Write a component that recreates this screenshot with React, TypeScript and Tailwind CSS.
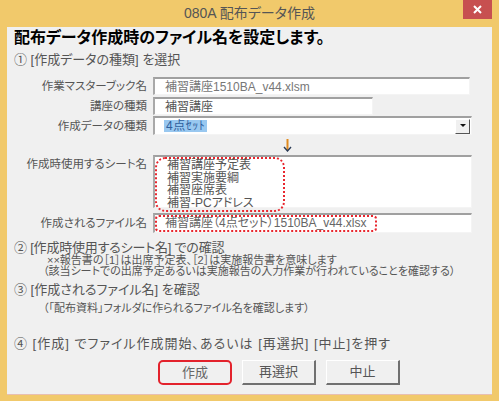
import React from 'react';

const FONT = "font-['Liberation_Sans','Noto_Sans_CJK_JP',sans-serif] [font-feature-settings:'palt']";

const sunken =
  'bg-white border-t-2 border-l-2 border-b border-r border-t-[#a0a0a0] border-l-[#a9a9a9] border-b-[#f4f4f4] border-r-[#f4f4f4]';

const Label = ({ children }: { children: React.ReactNode }) => (
  <div className="w-[140px] shrink-0 text-right text-[11.5px] leading-[14px] text-[#555]">{children}</div>
);

const Button = ({ children, primary }: { children: React.ReactNode; primary?: boolean }) =>
  primary ? (
    <button className="w-[74px] h-[25px] rounded-[5px] border-2 border-[#e3222c] bg-[#f0f0f0] text-[13px] text-[#666] flex items-center justify-center">
      {children}
    </button>
  ) : (
    <button className="w-[74px] h-[25px] bg-[#f0f0f0] border-t border-l border-t-white border-l-white border-r-2 border-b-2 border-r-[#707070] border-b-[#707070] text-[13px] text-[#555] flex items-center justify-center">
      {children}
    </button>
  );

export default function App() {
  return (
    <div className={`w-[499px] h-[401px] bg-[#f1c96b] flex flex-col ${FONT}`}>
      {/* title bar */}
      <div className="h-[27px] shrink-0 grid grid-cols-[1fr_auto_1fr]">
        <div />
        <div className="text-[14px] leading-[27px] text-[#555]">080A 配布データ作成</div>
        <div className="flex justify-end pr-[7px]">
          <div className="w-[29px] h-[19px] bg-[#c75050] flex items-center justify-center">
            <svg width="9" height="9" viewBox="0 0 9 9">
              <path d="M1 1 L8 8 M8 1 L1 8" stroke="white" strokeWidth="2" />
            </svg>
          </div>
        </div>
      </div>

      {/* client area */}
      <div className="mx-[7px] h-[368px] bg-[#f0f0f0] border-b border-[#e8bfb0] flex flex-col pl-[7px]">
        <div className="pt-[1px] text-[16px] leading-[20px] font-bold text-black">
          配布データ作成時のファイル名を設定します。
        </div>
        <div className="mt-[4px] text-[13px] leading-[16px] text-[#555]">① [作成データの種類] を選択</div>

        {/* form rows */}
        <div className="mt-[9px] flex flex-col -ml-[7px]">
          <div className="flex items-center gap-[6px]">
            <Label>作業マスターブック名</Label>
            <div className={`w-[317px] h-[18px] ${sunken} flex items-center pl-[10px] text-[12px] leading-[14px] text-[#777]`}>
              補習講座1510BA_v44.xlsm
            </div>
          </div>
          <div className="mt-[2px] flex items-center gap-[6px]">
            <Label>講座の種類</Label>
            <div className={`w-[220px] h-[18px] ${sunken} flex items-center pl-[10px] text-[12px] leading-[14px] text-[#555]`}>
              補習講座
            </div>
          </div>
          <div className="mt-[1px] flex items-center gap-[6px]">
            <Label>作成データの種類</Label>
            <div className={`w-[319px] h-[19px] ${sunken} flex items-center pl-[9px] pr-[1px]`}>
              <span className="bg-[#99c8f0] text-[#2f5f9e] text-[12px] leading-[12px] px-[2px] tracking-[0.5px]">4点ｾｯﾄ</span>
              <div className="ml-auto w-[15px] h-[15px] bg-[#f0f0f0] border-t border-l border-t-white border-l-white border-r border-b border-r-[#555] border-b-[#555] flex items-center justify-center">
                <svg width="6" height="4" viewBox="0 0 6 4">
                  <path d="M0 0 H6 L3 3 Z" fill="#111" />
                </svg>
              </div>
            </div>
          </div>

          {/* arrow */}
          <div className="h-[20px] flex items-center pl-[276px]">
            <svg width="9" height="13" viewBox="0 0 9 13">
              <path d="M4.5 0 V11" stroke="#e08a1e" strokeWidth="2" />
              <path d="M1 8 L4.5 12 L8 8" stroke="#2a3a55" strokeWidth="1.4" fill="none" />
            </svg>
          </div>

          <div className="flex items-start gap-[6px]">
            <div className="pt-[2px]">
              <Label>作成時使用するシート名</Label>
            </div>
            <div className={`relative w-[319px] h-[53px] ${sunken}`}>
              <div className="absolute left-0 top-0 w-[130px] h-[55px] rounded-[10px] border-2 border-dotted border-[#e8262e] pl-[10px] text-[12px] leading-[12.5px] text-[#555]">
                <div>補習講座予定表</div>
                <div>補習実施要綱</div>
                <div>補習座席表</div>
                <div>補習-PCアドレス</div>
              </div>
            </div>
          </div>

          <div className="mt-[5px] flex items-center gap-[6px]">
            <Label>作成されるファイル名</Label>
            <div className={`w-[319px] h-[20px] ${sunken} flex items-center`}>
              <span className="h-[17px] rounded-[4px] border-2 border-dotted border-[#e8262e] pl-[8px] pr-[8px] text-[12px] leading-[13px] text-[#666] flex items-center">
                補習講座（4点セット）1510BA_v44.xlsx
              </span>
            </div>
          </div>
        </div>

        {/* steps */}
        <div className="mt-[7px] text-[13px] leading-[16px] text-[#555] tracking-[-0.2px]">② [作成時使用するシート名] での確認</div>
        <div className="-mt-[1px] pl-[33px] text-[11px] leading-[11px] text-[#555]">
          ××報告書の［1］は出席予定表、［2］は実施報告書を意味します
        </div>
        <div className="pl-[29px] text-[11px] leading-[11px] text-[#555]">
          （該当シートでの出席予定あるいは実施報告の入力作業が行われていることを確認する）
        </div>

        <div className="mt-[5px] text-[13px] leading-[16px] text-[#555]">③ [作成されるファイル名] を確認</div>
        <div className="mt-[5px] pl-[29px] text-[11px] leading-[11px] text-[#555]">
          （「配布資料」フォルダに作られるファイル名を確認します）
        </div>

        <div className="mt-[22px] text-[13px] leading-[16px] text-[#555] tracking-[1px]">
          ④ [作成] でファイル作成開始、あるいは [再選択] [中止]を押す
        </div>

        <div className="mt-[8px] flex gap-[10px] pl-[144px]">
          <Button primary>作成</Button>
          <Button>再選択</Button>
          <Button>中止</Button>
        </div>
      </div>
    </div>
  );
}
